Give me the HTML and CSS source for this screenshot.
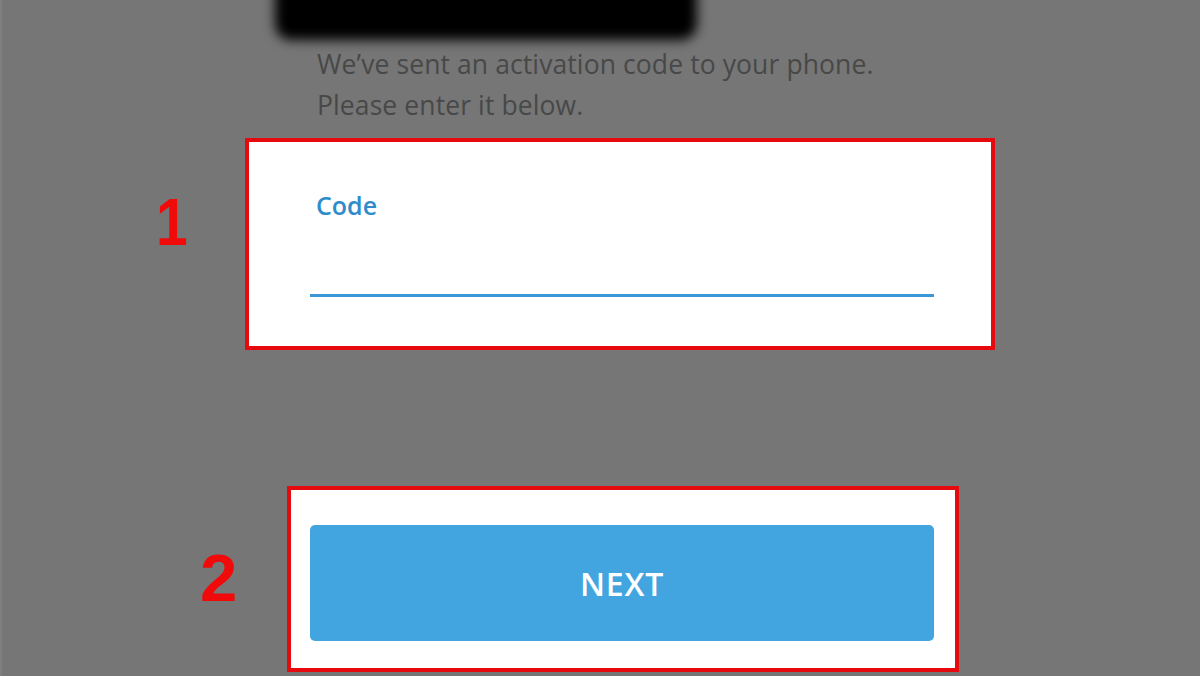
FILE: index.html
```html
<!DOCTYPE html>
<html>
<head>
<meta charset="utf-8">
<link rel="stylesheet" href="styles.css">
</head>
<body>
<div class="page">
  <div class="redact"></div>
  <div class="intro">
    <p>We’ve sent an activation code to your phone.</p>
    <p>Please enter it below.</p>
  </div>
  <div class="row row-code">
    <div class="num num-1"><span class="digit">1</span></div>
    <div class="box box-code">
      <div class="label">Code</div>
      <div class="field"></div>
    </div>
  </div>
  <div class="row row-next">
    <div class="num num-2"><span class="digit">2</span></div>
    <div class="box box-next">
      <div class="btn">NEXT</div>
    </div>
  </div>
</div>
</body>
</html>
```
FILE: styles.css
```css
html, body {
  margin: 0;
  padding: 0;
  background: #767676;
  width: 1200px;
  height: 676px;
  overflow: hidden;
  font-family: "Open Sans", "Liberation Sans", sans-serif;
}
.page {
  width: 1200px;
  height: 676px;
  overflow: hidden;
  border-left: 2px solid #7f7f7f;
  box-sizing: border-box;
}
.redact {
  margin: -30px 0 0 273px;
  width: 422px;
  height: 70px;
  background: #000;
  border-radius: 16px;
  filter: blur(6px);
}
.intro {
  margin: 4px 0 0 315px;
  color: #484848;
  font-size: 26.5px;
  line-height: 41px;
  letter-spacing: 0.1px;
}
.intro p {
  margin: 0;
}
.row {
  display: flex;
}
.row-code {
  margin-top: 12px;
}
.row-next {
  margin-top: 136px;
}
.num {
  color: #f00a0a;
  font-family: "Liberation Sans", Arial, sans-serif;
  font-weight: 700;
  font-size: 67px;
  line-height: 1;
}
.digit {
  display: inline-block;
}
.num-1 {
  width: 243px;
  padding-left: 154px;
  box-sizing: border-box;
  margin-top: 50px;
}
.num-1 .digit {
  transform: scaleX(0.85);
  transform-origin: left center;
}
.num-2 {
  width: 285px;
  padding-left: 198px;
  box-sizing: border-box;
  margin-top: 58px;
}
.box {
  background: #fff;
  border: 4px solid #e60a0f;
  box-sizing: border-box;
}
.box-code {
  width: 750px;
  height: 212px;
  padding: 48px 0 0 61px;
}
.label {
  color: #2e8cca;
  font-weight: 600;
  font-size: 25px;
  line-height: 30px;
  margin-left: 6px;
}
.field {
  margin-top: 74px;
  width: 624px;
  height: 3px;
  background: #3b98d6;
}
.box-next {
  width: 672px;
  height: 186px;
  padding: 35px 0 0 19px;
}
.btn {
  width: 624px;
  height: 116px;
  background: #42a5e0;
  border-radius: 5px;
  color: #fff;
  font-weight: 600;
  font-size: 32px;
  letter-spacing: 0.8px;
  display: flex;
  align-items: center;
  justify-content: center;
}
```
